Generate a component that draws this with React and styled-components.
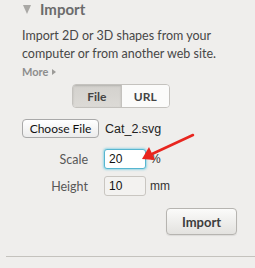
import styled, { createGlobalStyle } from "styled-components";

const GlobalStyle = createGlobalStyle`
  html, body {
    margin: 0;
    padding: 0;
    background: #efeeec;
  }
  body {
    font-family: "Lato", "Open Sans", sans-serif;
    overflow: hidden;
  }
`;

const Panel = styled.section`
  position: relative;
  width: 255px;
  height: 268px;
  background: #efeeec;
  overflow: hidden;
`;

const Content = styled.div`
  padding: 2px 18px 0 22px;
`;

const Header = styled.div`
  display: flex;
  align-items: center;
  gap: 9px;
  height: 14px;
  color: #6b6b6b;
  font-size: 15px;
  font-weight: 700;
`;

const Triangle = styled.span`
  width: 0;
  height: 0;
  margin-left: 1px;
  border-left: 4.5px solid transparent;
  border-right: 4.5px solid transparent;
  border-top: 9px solid #a9a8a5;
`;

const Description = styled.p`
  margin: 11px 0 0;
  color: #474747;
  font-size: 12.5px;
  line-height: 18px;
`;

const More = styled.div`
  display: flex;
  align-items: center;
  gap: 4px;
  margin-top: 2px;
  color: #8d8d8d;
  font-size: 11px;
  font-weight: 700;
  line-height: 14px;

  &::after {
    content: "";
    border-top: 3px solid transparent;
    border-bottom: 3px solid transparent;
    border-left: 4px solid #9c9b98;
  }
`;

const Toggle = styled.div`
  display: flex;
  width: 98px;
  height: 24px;
  margin: 5px 0 0 50px;
  border: 1px solid #c4c2be;
  border-radius: 4px;
  overflow: hidden;
  box-sizing: border-box;
`;

const ToggleItem = styled.div`
  flex: 1;
  display: flex;
  align-items: center;
  justify-content: center;
  font-size: 12px;
  font-weight: 700;
  color: #444;
  background: ${(p) => (p.$active ? "linear-gradient(#d3d1cd, #dcdad6)" : "#fbfbfa")};
  box-shadow: ${(p) => (p.$active ? "inset 0 1px 2px rgba(0,0,0,0.15)" : "none")};
  & + & {
    border-left: 1px solid #c4c2be;
  }
`;

const FileRow = styled.div`
  display: flex;
  align-items: center;
  gap: 6px;
  margin-top: 11px;
`;

const ChooseButton = styled.button`
  height: 19px;
  width: 77px;
  padding: 0;
  border: 1px solid #a9a9a9;
  border-radius: 4px;
  background: linear-gradient(#ffffff, #ececec);
  font-family: "Lato", sans-serif;
  font-size: 12px;
  color: #111;
`;

const FileName = styled.span`
  font-family: "Liberation Sans", sans-serif;
  font-size: 12.5px;
  color: #222;
`;

const Form = styled.div`
  display: grid;
  grid-template-columns: 66px 42px auto;
  column-gap: 16px;
  row-gap: 7px;
  align-items: center;
  margin-top: 11px;
`;

const Label = styled.span`
  text-align: right;
  color: #575757;
  font-size: 12.5px;
`;

const Input = styled.div`
  box-sizing: border-box;
  height: 20px;
  padding-left: 4px;
  display: flex;
  align-items: center;
  font-family: "Liberation Sans", sans-serif;
  font-size: 12px;
  color: #111;
  border-radius: 3px;
  background: ${(p) => (p.$focus ? "#fff" : "#f3f2f0")};
  border: 1px solid ${(p) => (p.$focus ? "#57b6d0" : "#c9c6c1")};
  box-shadow: ${(p) => (p.$focus ? "0 0 2px 1px rgba(100,200,225,0.6)" : "none")};
`;

const Unit = styled.span`
  margin-left: -12px;
  font-family: "Liberation Sans", sans-serif;
  font-size: 12px;
  color: #333;
`;

const Actions = styled.div`
  display: flex;
  justify-content: flex-end;
  margin-top: 12px;
`;

const ImportButton = styled.button`
  width: 71px;
  height: 27px;
  border: 1px solid #b6b4b0;
  border-radius: 4px;
  background: linear-gradient(#fbfbfa, #e3e2df);
  box-shadow: 0 1px 1px rgba(0,0,0,0.08);
  font-family: "Lato", sans-serif;
  font-size: 13px;
  font-weight: 700;
  color: #3d3d3d;
`;

const Divider = styled.hr`
  margin: 21px 0 0 6px;
  border: none;
  border-top: 1px solid #c4c2bd;
`;

const NextHeader = styled.div`
  display: flex;
  align-items: center;
  gap: 10px;
  margin: 7px 0 0 20px;
  color: #6b6b6b;
  font-size: 15px;
  font-weight: 700;

  &::before {
    content: "";
    border-top: 4px solid transparent;
    border-bottom: 4px solid transparent;
    border-left: 7px solid #a9a8a5;
  }
`;

const Arrow = styled.svg`
  position: absolute;
  left: 0;
  top: 0;
  pointer-events: none;
`;

export default function App() {
  return (
    <Panel>
      <GlobalStyle />
      <Content>
        <Header>
          <Triangle />
          Import
        </Header>
        <Description>
          Import 2D or 3D shapes from your computer or from another web site.
        </Description>
        <More>More</More>
        <Toggle>
          <ToggleItem $active>File</ToggleItem>
          <ToggleItem>URL</ToggleItem>
        </Toggle>
        <FileRow>
          <ChooseButton>Choose File</ChooseButton>
          <FileName>Cat_2.svg</FileName>
        </FileRow>
        <Form>
          <Label>Scale</Label>
          <Input $focus>20</Input>
          <Unit>%</Unit>
          <Label>Height</Label>
          <Input>10</Input>
          <Unit>mm</Unit>
        </Form>
        <Actions>
          <ImportButton>Import</ImportButton>
        </Actions>
      </Content>
      <Divider />
      <NextHeader>Shape Script</NextHeader>
      <Arrow width="255" height="268" viewBox="0 0 255 268">
        <line x1="193" y1="135" x2="152" y2="154" stroke="#e8261f" strokeWidth="2.5" strokeLinecap="round" />
        <polygon points="142,159 149,147 155,160" fill="#e8261f" />
      </Arrow>
    </Panel>
  );
}
